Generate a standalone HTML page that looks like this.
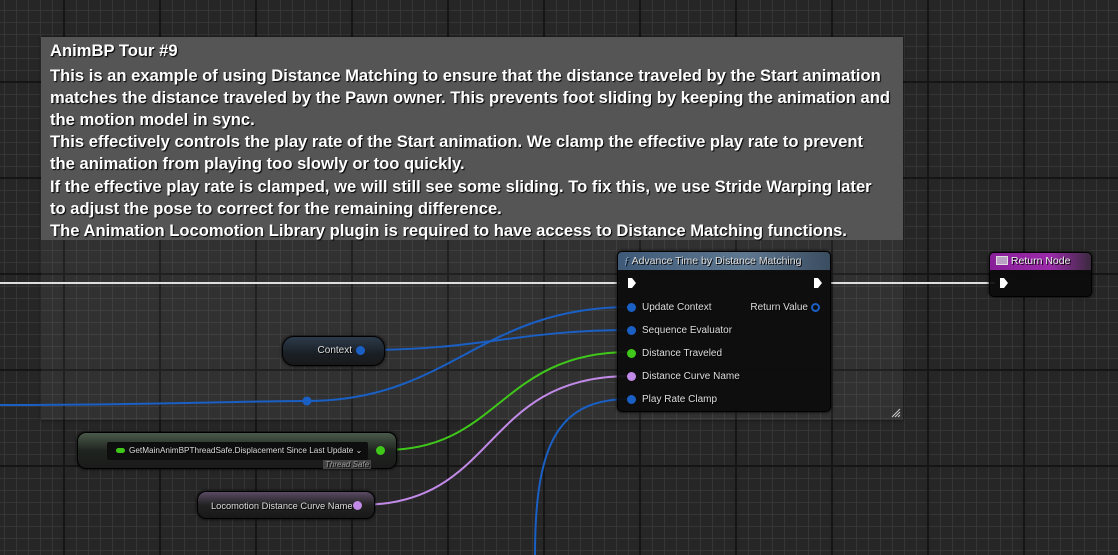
<!DOCTYPE html>
<html><head><meta charset="utf-8"><style>
*{margin:0;padding:0;box-sizing:border-box}
body{width:1118px;height:555px;overflow:hidden;background:#262626;font-family:"Liberation Sans",sans-serif;position:relative}
.abs{position:absolute}
.cm{position:absolute;left:41px;top:37px;width:862px;height:383px;background:rgba(255,255,255,0.05);box-shadow:0 0 3px rgba(0,0,0,.6)}
.cmh{position:absolute;left:0;top:0;width:862px;height:203px;background:#555;padding:3px 9px;color:#fff;font-weight:bold;font-size:16.6px;line-height:22.1px;text-shadow:1px 1px 1px #000;white-space:nowrap}
.node{position:absolute;background:rgba(12,12,12,.93);border-radius:5px;border:1px solid #000;box-shadow:0 0 3px #000}
.pin{font-size:10px;color:#ddd;position:absolute;white-space:nowrap;text-shadow:1px 1px 0 #000}
.dot{position:absolute;width:9px;height:9px;border-radius:50%}
</style></head><body>
<svg class="abs" width="1118" height="555" style="left:0;top:0">
<defs>
<pattern id="mi" width="12" height="12" patternUnits="userSpaceOnUse" x="4" y="10"><path d="M0 0H12M0 0V12" stroke="#353535" stroke-width="2" fill="none"/></pattern>
</defs>
<rect width="1118" height="555" fill="#262626"/>
<rect width="1118" height="555" fill="url(#mi)"/>
<g stroke="#151515" stroke-width="2">
<path d="M64 0V555M160 0V555M256 0V555M352 0V555M448 0V555M544 0V555M640 0V555M736 0V555M832 0V555M928 0V555M1024 0V555"/>
<path d="M0 82H1118M0 178H1118M0 274H1118M0 370H1118M0 466H1118"/>
</g>
</svg>
<div class="cm"><div class="cmh"><div style="margin-bottom:3px">AnimBP Tour #9</div>This is an example of using Distance Matching to ensure that the distance traveled by the Start animation<br>matches the distance traveled by the Pawn owner. This prevents foot sliding by keeping the animation and<br>the motion model in sync.<br>This effectively controls the play rate of the Start animation. We clamp the effective play rate to prevent<br>the animation from playing too slowly or too quickly.<br>If the effective play rate is clamped, we will still see some sliding. To fix this, we use Stride Warping later<br>to adjust the pose to correct for the remaining difference.<br>The Animation Locomotion Library plugin is required to have access to Distance Matching functions.</div>
<svg class="abs" style="right:2px;bottom:2px" width="10" height="10"><path d="M1 9L9 1M4 9L9 4M7 9L9 7" stroke="#ccc" stroke-width="1"/></svg></div>
<svg class="abs" width="1118" height="555" style="left:0;top:0" fill="none">
<path d="M0 283H620M830 283H995" stroke="#ddd" stroke-width="2"/>
<path d="M0 405C150 405 250 401 307 401C450 401 480 307 630 307" stroke="#1a5fc4" stroke-width="2"/>
<circle cx="307" cy="401" r="4.5" fill="#1a5fc4"/>
<path d="M365 350C480 350 520 330 630 330" stroke="#1a5fc4" stroke-width="2"/>
<path d="M385 450C500 450 500 352 630 352" stroke="#3fc81a" stroke-width="2"/>
<path d="M360 505C500 505 480 376 630 376" stroke="#c28ae8" stroke-width="2"/>
<path d="M535 555C535 440 560 399 630 399" stroke="#1a5fc4" stroke-width="2"/>
</svg>
<div class="node" style="left:617px;top:251px;width:214px;height:161px">
<div style="height:18px;background:linear-gradient(90deg,#3e5a78,#5f7891 60%,#3a4c60);border-radius:4px 4px 0 0;color:#ddd;font-size:10.5px;padding:3px 6px;text-shadow:1px 1px 0 #000"><i style="color:#8ac;font-family:'Liberation Serif',serif">ƒ</i> Advance Time by Distance Matching</div>
<svg class="abs" style="left:9px;top:25px" width="10" height="12"><path d="M1 1H5L9 6L5 11H1Z" fill="#fff"/></svg>
<svg class="abs" style="left:195px;top:25px" width="10" height="12"><path d="M1 1H5L9 6L5 11H1Z" fill="#fff"/></svg>
<div class="dot" style="left:9px;top:51px;background:#1a5fc4"></div><div class="pin" style="left:24px;top:50px">Update Context</div>
<div class="pin" style="right:22px;top:50px">Return Value</div><div class="dot" style="left:193px;top:51px;border:2px solid #1a5fc4"></div>
<div class="dot" style="left:9px;top:74px;background:#1a5fc4"></div><div class="pin" style="left:24px;top:73px">Sequence Evaluator</div>
<div class="dot" style="left:9px;top:97px;background:#3fc81a"></div><div class="pin" style="left:24px;top:96px">Distance Traveled</div>
<div class="dot" style="left:9px;top:120px;background:#c28ae8"></div><div class="pin" style="left:24px;top:119px">Distance Curve Name</div>
<div class="dot" style="left:9px;top:143px;background:#1a5fc4"></div><div class="pin" style="left:24px;top:142px">Play Rate Clamp</div>
</div>
<div class="node" style="left:989px;top:252px;width:103px;height:45px">
<div style="height:17px;background:linear-gradient(90deg,#8a1f9a,#9a2aa8 60%,#3a2a3e);border-radius:4px 4px 0 0;color:#eee;font-size:10.5px;padding:2px 6px;text-shadow:1px 1px 0 #000"><span style="display:inline-block;width:12px;height:9px;background:#b9a0c4;border:1px solid #ddd;vertical-align:-1px"></span> Return Node</div>
<svg class="abs" style="left:9px;top:24px" width="10" height="12"><path d="M1 1H5L9 6L5 11H1Z" fill="#fff"/></svg>
</div>
<div class="node" style="left:282px;top:336px;width:103px;height:30px;border-radius:12px;background:linear-gradient(#2c3a4a,#1a1f25 60%,#181818)">
<div class="pin" style="right:32px;top:8px;font-size:10px">Context</div><div class="dot" style="left:73px;top:9px;background:#1a5fc4"></div></div>
<div class="node" style="left:77px;top:432px;width:320px;height:37px;border-radius:9px;background:linear-gradient(#4a5a4a,#202420 50%,#1a1a1a)">
<div style="position:absolute;left:29px;top:9px;width:261px;height:18px;background:#0e0e0e;border-radius:2px"></div>
<div style="position:absolute;left:38px;top:15px;width:9px;height:5px;background:#3fc81a;border-radius:3px"></div>
<div class="pin" style="left:51px;top:12px;font-size:8.2px">GetMainAnimBPThreadSafe.Displacement Since Last Update ⌄</div>
<div class="pin" style="left:245px;top:27px;font-size:8px;color:#999;background:#444;font-style:italic;padding:0 2px">Thread Safe</div>
<div class="dot" style="left:298px;top:13px;background:#3fc81a"></div></div>
<div class="node" style="left:197px;top:491px;width:178px;height:28px;border-radius:9px;background:linear-gradient(#5a4a64,#222 50%,#181818)">
<div class="pin" style="left:13px;top:9px;font-size:9.3px">Locomotion Distance Curve Name</div>
<div class="dot" style="left:155px;top:9px;background:#c28ae8"></div></div>
</body></html>
